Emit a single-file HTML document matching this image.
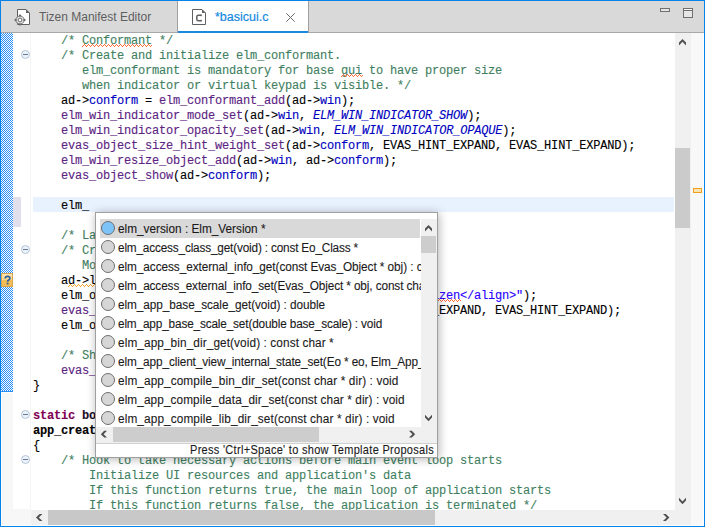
<!DOCTYPE html>
<html><head><meta charset="utf-8">
<style>
*{margin:0;padding:0;box-sizing:border-box}
html,body{width:705px;height:527px;overflow:hidden;background:#fff;position:relative}
.a{position:absolute}
#frame{left:0;top:0;width:705px;height:527px;border:1px solid #0583e8}
#tabbar{left:1px;top:1px;width:703px;height:32px;background:#d9d9d9;border-bottom:1px solid #a8a8a8}
.tabtxt{font-family:"Liberation Sans",sans-serif;font-size:13px;white-space:pre;line-height:16px}
#code{-webkit-text-stroke:0.12px;left:33px;top:34px;font-family:"Liberation Mono",monospace;font-size:12px;letter-spacing:-0.2px;line-height:15px;white-space:pre;color:#000}
.c{color:#3f7f5f}
.f{color:#5c2382}
.fd{color:#0000c0}
.en{color:#0000c0;font-style:italic}
.kw{color:#7f0055;font-weight:bold}
.st{color:#2a00ff}
.b{font-weight:bold}
.fold{width:9px;height:9px;border-radius:50%;border:1px solid #b7c4d6;background:#e9f3fb}
.fold:after{content:"";position:absolute;left:1px;top:3px;width:5px;height:1px;background:#6f7890}
.sq{height:3px;background:repeating-linear-gradient(90deg,transparent 0 0px,transparent 0 0)}
.pop{transform:scaleY(1.16);transform-origin:0 12px;-webkit-text-stroke:0.1px;font-family:"Liberation Sans",sans-serif;font-size:11.8px;white-space:pre;color:#1a1a1a}
.ico{width:14px;height:14px;border-radius:50%;border:1px solid #6e6e6e;background:#d4d4d4}
</style></head><body>
<!-- tab bar -->
<div class="a" id="tabbar"></div>
<!-- inactive tab icon -->
<svg class="a" style="left:0;top:0" width="320" height="33">
 <path d="M17.5 9.5H26L29.5 13V24.5H17.5Z" fill="#fff" stroke="#606060"/>
 <path d="M26 9.5V13H29.5Z" fill="#606060"/>
 <rect x="19" y="14.6" width="2" height="1.6" fill="#6a6a6a"/><rect x="19" y="23.8" width="2" height="1.6" fill="#6a6a6a"/>
 <rect x="14.6" y="19" width="1.6" height="2" fill="#6a6a6a"/><rect x="23.8" y="19" width="1.6" height="2" fill="#6a6a6a"/>
 <path d="M18.2 16.2H21.8L23.8 18.2V21.8L21.8 23.8H18.2L16.2 21.8V18.2Z" fill="#e4e4e4" stroke="#6a6a6a" stroke-width="1"/>
 <circle cx="20" cy="20" r="1.9" fill="#fff" stroke="#6a6a6a" stroke-width="1"/>
</svg>
<div class="a tabtxt" style="left:39px;top:9px;color:#5e5e5e;font-size:12px">Tizen Manifest Editor</div>
<!-- active tab -->
<div class="a" style="left:177px;top:1px;width:132px;height:32px;background:#fff;border-left:1px solid #a0a0a0;border-right:1px solid #a0a0a0"></div>
<div class="a" style="left:178px;top:31px;width:130px;height:2px;background:#1a8ae0"></div>
<svg class="a" style="left:0;top:0" width="320" height="33">
 <path d="M192.5 9.5H202L205.5 13V24.5H192.5Z" fill="#fff" stroke="#606060"/>
 <path d="M202 9.5V13H205.5Z" fill="#606060"/>
 <path d="M201.2 15.2H198.3Q196.8 15.2 196.8 16.7V19.3Q196.8 20.8 198.3 20.8H201.2" fill="none" stroke="#606060" stroke-width="1.5"/>
 <path d="M201.2 14.5V16.3M201.2 19.7V21.5" stroke="#606060" stroke-width="1.2"/>
</svg>
<div class="a tabtxt" style="left:215px;top:9px;color:#1589e0;font-size:12.5px;-webkit-text-stroke:0.2px">*basicui.c</div>
<svg class="a" style="left:0;top:0" width="320" height="33"><path d="M286.3 13.3L294.7 21.7M294.7 13.3L286.3 21.7" stroke="#6a6a6a" stroke-width="1"/></svg>
<!-- min / max -->
<div class="a" style="left:660px;top:8px;width:10px;height:4px;border:1px solid #707070;background:#e6e6e6"></div>
<svg class="a" style="left:0;top:0" width="705" height="33" shape-rendering="crispEdges"><rect x="683.5" y="8.5" width="9" height="9" fill="#e6e6e6" stroke="#707070"/><rect x="684" y="9" width="8" height="1" fill="#f4f4f4"/><rect x="684" y="10" width="8" height="1" fill="#707070"/></svg>

<!-- editor left rulers -->
<svg class="a" style="left:1px;top:33px" width="12" height="358" shape-rendering="crispEdges"><defs><pattern id="chk" width="2" height="2" patternUnits="userSpaceOnUse"><rect width="2" height="2" fill="#fff"/><rect x="0" y="0" width="1" height="1" fill="#2a8cf5"/><rect x="1" y="1" width="1" height="1" fill="#2a8cf5"/></pattern></defs><rect width="12" height="358" fill="url(#chk)"/></svg>
<div class="a" style="left:1px;top:391px;width:12px;height:1px;background:#2a8cf5"></div>
<div class="a" style="left:2px;top:393px;width:11px;height:133px;background:#f7f7f7"></div>
<div class="a" style="left:13px;top:509px;width:18px;height:17px;background:#f7f7f7"></div>
<div class="a" style="left:30px;top:33px;width:1px;height:477px;background:#f6f6f6"></div>
<div class="a" style="left:13px;top:197px;width:8px;height:30px;background:#e1dfec"></div>
<!-- ? icon -->
<div class="a" style="left:1px;top:273px;width:12px;height:14px;background:linear-gradient(#fde6ad,#f8d68a 50%,#f4bf58 50%,#f3bb52);border:1px solid #d9a451"></div>
<svg class="a" style="left:0;top:0" width="20" height="300"><path d="M5.2 278.4Q5.2 276.3 7.6 276.3Q9.9 276.3 9.9 278.2Q9.9 279.4 8.6 280.1Q7.6 280.7 7.6 281.8" fill="none" stroke="#2b5f9f" stroke-width="1.7"/><rect x="6.7" y="282.7" width="1.8" height="1.7" fill="#2b5f9f"/></svg>
<!-- fold icons -->
<div class="a fold" style="left:21px;top:50px"></div>
<div class="a fold" style="left:21px;top:245px"></div>
<div class="a fold" style="left:21px;top:410px"></div>
<div class="a fold" style="left:21px;top:455px"></div>

<!-- current line -->
<div class="a" style="left:33px;top:197px;width:641px;height:15px;background:#e8f2fe"></div>

<!-- code -->
<div class="a" id="code"><span class="c">    /* Conformant */</span>
<span class="c">    /* Create and initialize elm_conformant.</span>
<span class="c">       elm_conformant is mandatory for base gui to have proper size</span>
<span class="c">       when indicator or virtual keypad is visible. */</span>
    ad-&gt;<span class="fd">conform</span> = <span class="f">elm_conformant_add</span>(ad-&gt;<span class="fd">win</span>);
    <span class="f">elm_win_indicator_mode_set</span>(ad-&gt;<span class="fd">win</span>, <span class="en">ELM_WIN_INDICATOR_SHOW</span>);
    <span class="f">elm_win_indicator_opacity_set</span>(ad-&gt;<span class="fd">win</span>, <span class="en">ELM_WIN_INDICATOR_OPAQUE</span>);
    <span class="f">evas_object_size_hint_weight_set</span>(ad-&gt;<span class="fd">conform</span>, EVAS_HINT_EXPAND, EVAS_HINT_EXPAND);
    <span class="f">elm_win_resize_object_add</span>(ad-&gt;<span class="fd">win</span>, ad-&gt;<span class="fd">conform</span>);
    <span class="f">evas_object_show</span>(ad-&gt;<span class="fd">conform</span>);

    elm_

<span class="c">    /* Label */</span>
<span class="c">    /* Create an actual view of the base gui.</span>
<span class="c">       Modify this part to change the view. */</span>
    ad-&gt;label = elm_label_add(ad-&gt;<span class="fd">conform</span>);
    elm_object_text_set(ad-&gt;label, <span class="st">"&lt;align=center&gt;Hello Tizen&lt;/align&gt;"</span>);
    <span class="f">evas_object_size_hint_weight_set</span>(ad-&gt;label, EVAS_HINT_EXPAND, EVAS_HINT_EXPAND);
    elm_object_content_set(ad-&gt;<span class="fd">conform</span>, ad-&gt;label);

<span class="c">    /* Show window after base gui is set up */</span>
    <span class="f">evas_object_show</span>(ad-&gt;<span class="fd">win</span>);
}

<span class="kw">static</span> <span class="b" style="color:#1c0c28">bool</span>
<span class="b">app_create</span>(<span class="kw">void</span> *data)
{
<span class="c">    /* Hook to take necessary actions before main event loop starts</span>
<span class="c">        Initialize UI resources and application's data</span>
<span class="c">        If this function returns true, the main loop of application starts</span>
<span class="c">        If this function returns false, the application is terminated */</span>
</div>

<svg class="a" style="left:0;top:0" width="705" height="527" shape-rendering="crispEdges"><path d="M82 46h1v1h-1zM83 45h1v1h-1zM84 44h1v1h-1zM85 45h1v1h-1zM86 46h1v1h-1zM87 45h1v1h-1zM88 44h1v1h-1zM89 45h1v1h-1zM90 46h1v1h-1zM91 45h1v1h-1zM92 44h1v1h-1zM93 45h1v1h-1zM94 46h1v1h-1zM95 45h1v1h-1zM96 44h1v1h-1zM97 45h1v1h-1zM98 46h1v1h-1zM99 45h1v1h-1zM100 44h1v1h-1zM101 45h1v1h-1zM102 46h1v1h-1zM103 45h1v1h-1zM104 44h1v1h-1zM105 45h1v1h-1zM106 46h1v1h-1zM107 45h1v1h-1zM108 44h1v1h-1zM109 45h1v1h-1zM110 46h1v1h-1zM111 45h1v1h-1zM112 44h1v1h-1zM113 45h1v1h-1zM114 46h1v1h-1zM115 45h1v1h-1zM116 44h1v1h-1zM117 45h1v1h-1zM118 46h1v1h-1zM119 45h1v1h-1zM120 44h1v1h-1zM121 45h1v1h-1zM122 46h1v1h-1zM123 45h1v1h-1zM124 44h1v1h-1zM125 45h1v1h-1zM126 46h1v1h-1zM127 45h1v1h-1zM128 44h1v1h-1zM129 45h1v1h-1zM130 46h1v1h-1zM131 45h1v1h-1zM132 44h1v1h-1zM133 45h1v1h-1zM134 46h1v1h-1zM135 45h1v1h-1zM136 44h1v1h-1zM137 45h1v1h-1zM138 46h1v1h-1zM139 45h1v1h-1zM140 44h1v1h-1zM141 45h1v1h-1zM142 46h1v1h-1zM143 45h1v1h-1zM144 44h1v1h-1zM145 45h1v1h-1zM146 46h1v1h-1zM147 45h1v1h-1zM148 44h1v1h-1zM149 45h1v1h-1zM150 46h1v1h-1zM151 45h1v1h-1z" fill="#ff6a3a"/><path d="M341 76h1v1h-1zM342 75h1v1h-1zM343 74h1v1h-1zM344 75h1v1h-1zM345 76h1v1h-1zM346 75h1v1h-1zM347 74h1v1h-1zM348 75h1v1h-1zM349 76h1v1h-1zM350 75h1v1h-1zM351 74h1v1h-1zM352 75h1v1h-1zM353 76h1v1h-1zM354 75h1v1h-1zM355 74h1v1h-1zM356 75h1v1h-1zM357 76h1v1h-1zM358 75h1v1h-1zM359 74h1v1h-1zM360 75h1v1h-1zM361 76h1v1h-1zM362 75h1v1h-1z" fill="#ff6a3a"/><path d="M425 301h1v1h-1zM426 300h1v1h-1zM427 299h1v1h-1zM428 300h1v1h-1zM429 301h1v1h-1zM430 300h1v1h-1zM431 299h1v1h-1zM432 300h1v1h-1zM433 301h1v1h-1zM434 300h1v1h-1zM435 299h1v1h-1zM436 300h1v1h-1zM437 301h1v1h-1zM438 300h1v1h-1zM439 299h1v1h-1zM440 300h1v1h-1zM441 301h1v1h-1zM442 300h1v1h-1zM443 299h1v1h-1zM444 300h1v1h-1zM445 301h1v1h-1zM446 300h1v1h-1zM447 299h1v1h-1zM448 300h1v1h-1zM449 301h1v1h-1zM450 300h1v1h-1zM451 299h1v1h-1zM452 300h1v1h-1zM453 301h1v1h-1zM454 300h1v1h-1zM455 299h1v1h-1zM456 300h1v1h-1zM457 301h1v1h-1zM458 300h1v1h-1zM459 299h1v1h-1zM460 300h1v1h-1z" fill="#ff6a3a"/><path d="M68 286h1v1h-1zM69 285h1v1h-1zM70 284h1v1h-1zM71 285h1v1h-1zM72 286h1v1h-1zM73 285h1v1h-1zM74 284h1v1h-1zM75 285h1v1h-1zM76 286h1v1h-1zM77 285h1v1h-1zM78 284h1v1h-1zM79 285h1v1h-1zM80 286h1v1h-1zM81 285h1v1h-1zM82 284h1v1h-1zM83 285h1v1h-1zM84 286h1v1h-1zM85 285h1v1h-1zM86 284h1v1h-1zM87 285h1v1h-1zM88 286h1v1h-1zM89 285h1v1h-1zM90 284h1v1h-1zM91 285h1v1h-1zM92 286h1v1h-1zM93 285h1v1h-1zM94 284h1v1h-1zM95 285h1v1h-1zM96 286h1v1h-1zM97 285h1v1h-1zM98 284h1v1h-1zM99 285h1v1h-1z" fill="#f2a423"/></svg>
<!-- scrollbars -->
<div class="a" style="left:675px;top:33px;width:16px;height:493px;background:#f0f0f0"></div>
<div class="a" style="left:691px;top:33px;width:12px;height:493px;background:#f8f8f8"></div>
<div class="a" style="left:675px;top:148px;width:15px;height:80px;background:#cbcbcb"></div>
<div class="a" style="left:693px;top:188px;width:9px;height:5px;border:1px solid #f0a020;background:#fde3b0"></div>
<div class="a" style="left:31px;top:510px;width:644px;height:15px;background:#f0f0f0"></div>
<div class="a" style="left:48px;top:510px;width:387px;height:15px;background:#c8c8c8"></div>
<div class="a" style="left:1px;top:525px;width:703px;height:1px;background:#fff"></div>
<div class="a" style="left:703px;top:33px;width:1px;height:493px;background:#fff"></div>

<svg class="a" style="left:0;top:0" width="705" height="527"><g fill="#4f4f4f">
<polygon points="679,42.6 682.5,39 686,42.6 686,45.4 682.5,41.8 679,45.4"/>
<polygon points="679,497.8 682.5,501.4 686,497.8 686,500.6 682.5,504.2 679,500.6"/>
<polygon points="39.6,514 36,517.5 39.6,521 42.4,521 38.8,517.5 42.4,514"/>
<polygon points="663,514 666.6,517.5 663,521 665.8,521 669.4,517.5 665.8,514"/>
</g></svg>
<!-- popup -->
<div class="a" style="left:95px;top:212px;width:343px;height:246px;background:#fff;border:1px solid #a0a0a0;box-shadow:1px 1px 9px rgba(0,0,0,.3)"></div>
<div class="a" style="left:100px;top:219px;width:320px;height:19px;background:#d9d9d9"></div>
<!-- items -->
<div class="a" style="left:96px;top:219px;width:325px;height:208px;overflow:hidden">
<div class="a ico" style="left:5px;top:2px;background:#7cc4f8"></div><div class="a pop" style="left:22px;top:3px;line-height:15px;letter-spacing:0px">elm_version : Elm_Version *</div>
<div class="a ico" style="left:5px;top:21px;background:#d6d6d6"></div><div class="a pop" style="left:22px;top:22px;line-height:15px;letter-spacing:-0.175px">elm_access_class_get(void) : const Eo_Class *</div>
<div class="a ico" style="left:5px;top:40px;background:#d6d6d6"></div><div class="a pop" style="left:22px;top:41px;line-height:15px;letter-spacing:-0.065px">elm_access_external_info_get(const Evas_Object * obj) : const char *</div>
<div class="a ico" style="left:5px;top:59px;background:#d6d6d6"></div><div class="a pop" style="left:22px;top:60px;line-height:15px;letter-spacing:-0.11px">elm_access_external_info_set(Evas_Object * obj, const char * text) : void</div>
<div class="a ico" style="left:5px;top:78px;background:#d6d6d6"></div><div class="a pop" style="left:22px;top:79px;line-height:15px;letter-spacing:-0.06px">elm_app_base_scale_get(void) : double</div>
<div class="a ico" style="left:5px;top:97px;background:#d6d6d6"></div><div class="a pop" style="left:22px;top:98px;line-height:15px;letter-spacing:-0.155px">elm_app_base_scale_set(double base_scale) : void</div>
<div class="a ico" style="left:5px;top:116px;background:#d6d6d6"></div><div class="a pop" style="left:22px;top:117px;line-height:15px;letter-spacing:0.1px">elm_app_bin_dir_get(void) : const char *</div>
<div class="a ico" style="left:5px;top:135px;background:#d6d6d6"></div><div class="a pop" style="left:22px;top:136px;line-height:15px;letter-spacing:-0.115px">elm_app_client_view_internal_state_set(Eo * eo, Elm_App_View_State state) : void</div>
<div class="a ico" style="left:5px;top:154px;background:#d6d6d6"></div><div class="a pop" style="left:22px;top:155px;line-height:15px;letter-spacing:0.11px">elm_app_compile_bin_dir_set(const char * dir) : void</div>
<div class="a ico" style="left:5px;top:173px;background:#d6d6d6"></div><div class="a pop" style="left:22px;top:174px;line-height:15px;letter-spacing:0.09px">elm_app_compile_data_dir_set(const char * dir) : void</div>
<div class="a ico" style="left:5px;top:192px;background:#d6d6d6"></div><div class="a pop" style="left:22px;top:193px;line-height:15px;letter-spacing:0.115px">elm_app_compile_lib_dir_set(const char * dir) : void</div>
</div>
<div class="a" style="left:421px;top:219px;width:16px;height:208px;background:#f0f0f0"></div>
<div class="a" style="left:421px;top:236px;width:15px;height:17px;background:#cdcdcd"></div>
<div class="a" style="left:96px;top:427px;width:341px;height:16px;background:#f0f0f0"></div>
<div class="a" style="left:113px;top:427px;width:206px;height:15px;background:#cdcdcd"></div>
<div class="a" style="left:96px;top:443px;width:341px;height:1px;background:#d0d0d0"></div>
<div class="a pop" style="left:190px;top:444px;font-size:11px;line-height:12px;letter-spacing:0.3px">Press 'Ctrl+Space' to show Template Proposals</div>

<svg class="a" style="left:0;top:0" width="705" height="527"><g fill="#4f4f4f">
<polygon points="425,228.6 428.5,225 432,228.6 432,231.4 428.5,227.8 425,231.4"/>
<polygon points="425,414.8 428.5,418.4 432,414.8 432,417.6 428.5,421.2 425,417.6"/>
<polygon points="104.2,430.8 100.8,434.2 104.2,437.6 107,437.6 103.6,434.2 107,430.8"/>
<polygon points="409,430.8 412.4,434.2 409,437.6 411.8,437.6 415.2,434.2 411.8,430.8"/>
</g></svg>
<div class="a" id="frame"></div>
</body></html>
